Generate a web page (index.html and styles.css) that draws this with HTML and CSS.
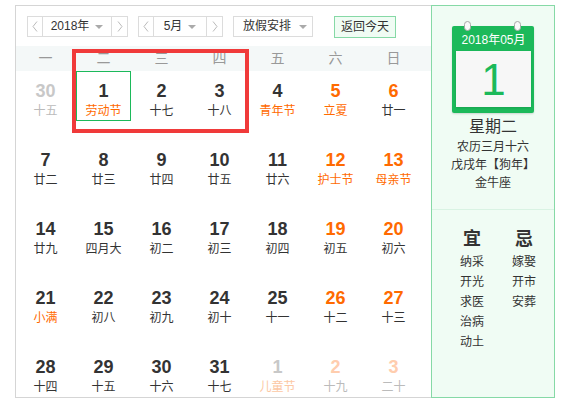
FILE: index.html
```html
<!DOCTYPE html>
<html lang="zh-CN">
<head>
<meta charset="utf-8">
<title>万年历</title>
<link rel="stylesheet" href="styles.css">
</head>
<body>
<div class="cal">
  <div class="main">
    <div class="toolbar">
      <div class="sel sel-year">
        <span class="arr arr-l"><svg width="16" height="19" viewBox="0 0 16 19"><polyline points="10,4.5 6,9.5 10,14.5" fill="none" stroke="#bbb" stroke-width="1"/></svg></span>
        <span class="val">2018年<i class="tri"></i></span>
        <span class="arr arr-r"><svg width="16" height="19" viewBox="0 0 16 19"><polyline points="6,4.5 10,9.5 6,14.5" fill="none" stroke="#bbb" stroke-width="1"/></svg></span>
      </div>
      <div class="sel sel-month">
        <span class="arr arr-l"><svg width="16" height="19" viewBox="0 0 16 19"><polyline points="10,4.5 6,9.5 10,14.5" fill="none" stroke="#bbb" stroke-width="1"/></svg></span>
        <span class="val">5月<i class="tri"></i></span>
        <span class="arr arr-r"><svg width="16" height="19" viewBox="0 0 16 19"><polyline points="6,4.5 10,9.5 6,14.5" fill="none" stroke="#bbb" stroke-width="1"/></svg></span>
      </div>
      <div class="sel sel-hol">
        <span class="val">放假安排<i class="tri"></i></span>
      </div>
      <div class="today-btn">返回今天</div>
    </div>
    <div class="week">
      <span>一</span><span>二</span><span>三</span><span>四</span><span>五</span><span>六</span><span>日</span>
    </div>
    <div class="grid">
      <div class="cell other"><b>30</b><em>十五</em></div>
      <div class="cell today"><b>1</b><em class="fest">劳动节</em></div>
      <div class="cell"><b>2</b><em>十七</em></div>
      <div class="cell"><b>3</b><em>十八</em></div>
      <div class="cell"><b>4</b><em class="fest">青年节</em></div>
      <div class="cell wk"><b>5</b><em class="fest">立夏</em></div>
      <div class="cell wk"><b>6</b><em>廿一</em></div>

      <div class="cell"><b>7</b><em>廿二</em></div>
      <div class="cell"><b>8</b><em>廿三</em></div>
      <div class="cell"><b>9</b><em>廿四</em></div>
      <div class="cell"><b>10</b><em>廿五</em></div>
      <div class="cell"><b>11</b><em>廿六</em></div>
      <div class="cell wk"><b>12</b><em class="fest">护士节</em></div>
      <div class="cell wk"><b>13</b><em class="fest">母亲节</em></div>

      <div class="cell"><b>14</b><em>廿九</em></div>
      <div class="cell"><b>15</b><em>四月大</em></div>
      <div class="cell"><b>16</b><em>初二</em></div>
      <div class="cell"><b>17</b><em>初三</em></div>
      <div class="cell"><b>18</b><em>初四</em></div>
      <div class="cell wk"><b>19</b><em>初五</em></div>
      <div class="cell wk"><b>20</b><em>初六</em></div>

      <div class="cell"><b>21</b><em class="fest">小满</em></div>
      <div class="cell"><b>22</b><em>初八</em></div>
      <div class="cell"><b>23</b><em>初九</em></div>
      <div class="cell"><b>24</b><em>初十</em></div>
      <div class="cell"><b>25</b><em>十一</em></div>
      <div class="cell wk"><b>26</b><em>十二</em></div>
      <div class="cell wk"><b>27</b><em>十三</em></div>

      <div class="cell"><b>28</b><em>十四</em></div>
      <div class="cell"><b>29</b><em>十五</em></div>
      <div class="cell"><b>30</b><em>十六</em></div>
      <div class="cell"><b>31</b><em>十七</em></div>
      <div class="cell other"><b>1</b><em class="fest">儿童节</em></div>
      <div class="cell other wk"><b>2</b><em>十九</em></div>
      <div class="cell other wk"><b>3</b><em>二十</em></div>
    </div>
    <div class="mark"></div>
  </div>
  <div class="side">
    <div class="card">
      <i class="ring ring-l"></i><i class="ring ring-r"></i>
      <div class="card-head">2018年05月</div>
      <div class="card-body">1</div>
    </div>
    <div class="weekday">星期二</div>
    <div class="info">农历三月十六</div>
    <div class="info">戊戌年【狗年】</div>
    <div class="info">金牛座</div>
    <div class="divider"></div>
    <div class="yiji">
      <div class="col">
        <div class="yj-title">宜</div>
        <div>纳采</div><div>开光</div><div>求医</div><div>治病</div><div>动土</div>
      </div>
      <div class="col">
        <div class="yj-title">忌</div>
        <div>嫁娶</div><div>开市</div><div>安葬</div>
      </div>
    </div>
  </div>
</div>
</body>
</html>
```

FILE: styles.css
```css
* { box-sizing: border-box; }
html, body { margin: 0; padding: 0; background: #fff; }
body {
  padding: 5px 0 0 15px;
  font-family: "Liberation Sans", "Noto Sans CJK SC", Arial, sans-serif;
  color: #333;
}
.cal {
  display: flex;
  width: 540px;
  height: 393px;
}
.main {
  position: relative;
  width: 416px;
  height: 393px;
  border: 1px solid #d5d5d5;
  border-right: none;
}
.toolbar {
  display: flex;
  align-items: flex-start;
  height: 21px;
  margin: 10px 0 9px;
  padding-left: 11px;
  font-size: 12px;
}
.sel {
  display: flex;
  height: 21px;
  border: 1px solid #dcdcdc;
  background: #fff;
  margin-right: 10px;
}
.sel-year { width: 101px; }
.sel-month { width: 85px; }
.sel-hol { width: 80px; margin-right: 21px; }
.arr { width: 16px; height: 19px; display: block; }
.arr svg { display: block; }
.arr-l { width: 15px; border-right: 1px solid #dcdcdc; }
.arr-r { width: 16px; border-left: 1px solid #dcdcdc; }
.arr-l svg { margin-left: -1px; }
.val {
  flex: 1;
  display: flex;
  align-items: center;
  justify-content: center;
  line-height: 19px;
  color: #333;
}
.sel-hol .val { justify-content: flex-start; padding-left: 9px; }
.tri {
  display: inline-block;
  width: 0;
  height: 0;
  margin-left: 6px;
  border-left: 4px solid transparent;
  border-right: 4px solid transparent;
  border-top: 4px solid #aaa;
}
.sel-hol .tri { margin-left: 8px; }
.today-btn {
  width: 62px;
  height: 22px;
  line-height: 20px;
  text-align: center;
  border: 1px solid #86d9a6;
  background: #f0fcf4;
  color: #333;
}
.week {
  display: grid;
  grid-template-columns: repeat(7, 55px);
  column-gap: 3px;
  padding-left: 2px;
  height: 25px;
  line-height: 25px;
  background: #f4f8f8;
  font-size: 14px;
  color: #999;
  text-align: center;
}
.grid {
  display: grid;
  grid-template-columns: repeat(7, 55px);
  grid-auto-rows: 50px;
  column-gap: 3px;
  row-gap: 19px;
  padding-left: 2px;
}
.cell {
  text-align: center;
  padding-top: 8px;
  border: 1px solid transparent;
}
.cell b {
  display: block;
  height: 24px;
  line-height: 24px;
  margin-top: -1px;
  font-size: 18px;
  font-weight: bold;
  color: #333;
}
.cell em {
  display: block;
  font-style: normal;
  font-size: 12px;
  line-height: 16px;
  color: #333;
}
.cell em.fest { color: #ff6a00; }
.cell.wk b { color: #ff6a00; }
.cell.today { border-color: #1cb95a; }
.cell.other b { color: #c8c8c8; }
.cell.other em { color: #bbb; }
.cell.other em.fest { color: #fcc8a4; }
.cell.other.wk b { color: #ffcdae; }
.mark {
  position: absolute;
  left: 56px;
  top: 43px;
  width: 177px;
  height: 84px;
  border: 4px solid #f03a3a;
}
.side {
  width: 124px;
  height: 393px;
  border: 1px solid #86d9a6;
  background: #f0fcf4;
  text-align: center;
}
.card {
  position: relative;
  width: 82px;
  margin: 20px auto 0;
  padding: 0 3px 6px 4px;
  background: #1cb95a;
  border-radius: 2px;
  box-shadow: 0 1px 2px rgba(0,0,0,0.15);
}
.ring {
  position: absolute;
  top: -5px;
  width: 7px;
  height: 10px;
  background: #fafafa;
  border: 1px solid #a8a8a8;
  border-radius: 4px;
}
.ring-l { left: 12px; }
.ring-r { right: 13px; }
.card-head {
  height: 25px;
  line-height: 28px;
  font-size: 12px;
  color: #fff;
  white-space: nowrap;
}
.card-body {
  height: 56px;
  line-height: 58px;
  background: #f7f7f7;
  font-size: 44px;
  color: #1cb95a;
  box-shadow: 0 1px 2px rgba(0,0,0,0.12);
}
.weekday {
  margin-top: 3px;
  font-size: 16px;
  line-height: 22px;
  color: #333;
}
.info {
  font-size: 12px;
  line-height: 18px;
  color: #333;
  white-space: nowrap;
}
.divider {
  height: 1px;
  margin-top: 17px;
  background: #d9f3e3;
}
.yiji {
  display: flex;
  gap: 16px;
  padding: 16px 0 0 22px;
  font-size: 12px;
  line-height: 20px;
  color: #333;
}
.col { width: 36px; text-align: center; }
.yj-title {
  font-size: 18px;
  font-weight: bold;
  line-height: 26px;
  color: #333;
}
```
